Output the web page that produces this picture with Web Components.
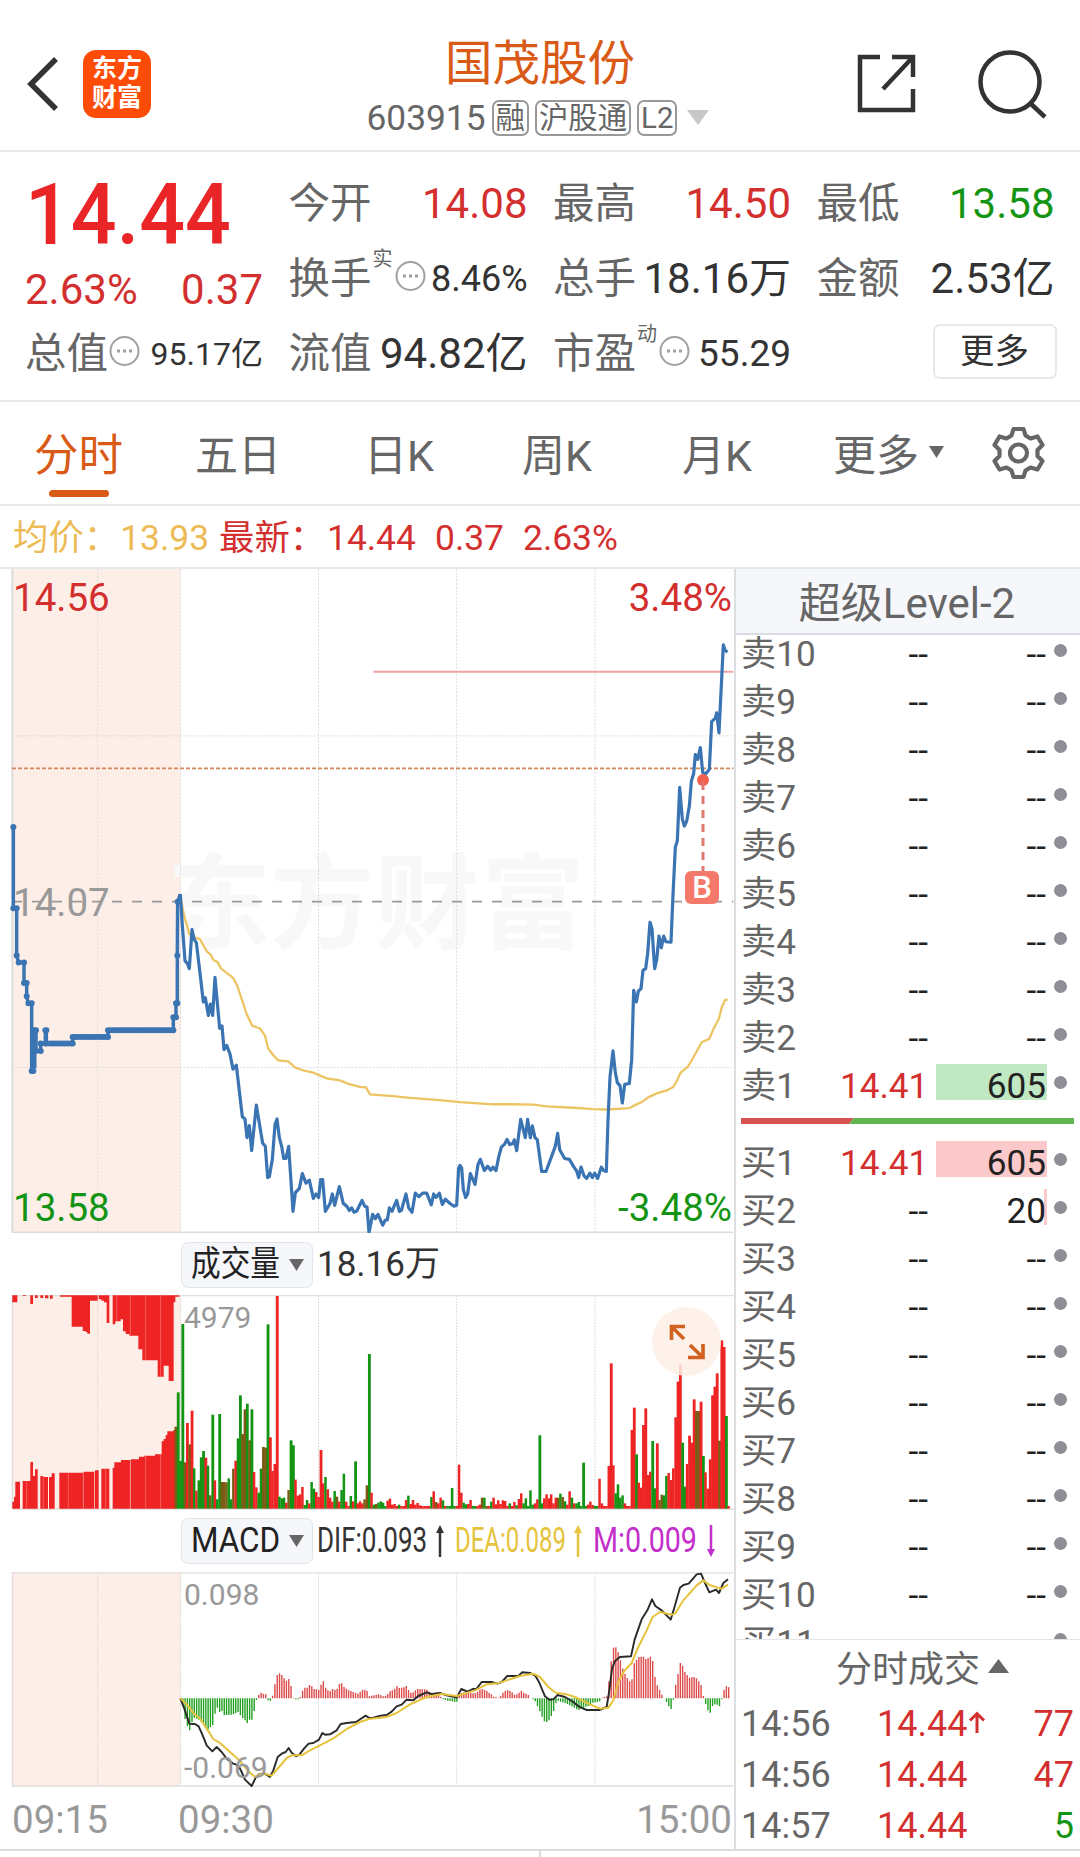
<!DOCTYPE html>
<html lang="zh-CN">
<head>
<meta charset="utf-8">
<title>国茂股份 603915</title>
<style>
  body{margin:0;background:#fff;color:#333;font-family:Roboto,"Noto Sans CJK SC",sans-serif;width:1080px;height:1857px;overflow:hidden;
    --up:#d32f2f;--down:#149414;--brand:#d95a16;--grey:#666;--line:#e6e8e9}
</style>
</head>
<body>
<stock-page></stock-page>
<script>
(function () {
  function define(name, html, setup) {
    const tpl = document.createElement('template');
    tpl.innerHTML = '<style>*{box-sizing:border-box}h1,h2,h3{margin:0}:host{display:block;box-sizing:border-box}</style>' + html;
    customElements.define(name, class extends HTMLElement {
      connectedCallback() {
        if (this.shadowRoot) return;
        this.attachShadow({ mode: 'open' }).appendChild(tpl.content.cloneNode(true));
        if (setup) setup(this, this.shadowRoot);
      }
    });
  }

  // text squeezed or stretched to the width given in w
  define('fit-text', `
    <style>:host{display:block;flex:none;white-space:nowrap}span{display:inline-block;transform-origin:0 50%}</style>
    <span><slot></slot></span>`, (el, s) => {
    const span = s.querySelector('span');
    const w = +el.getAttribute('w');
    el.style.width = w + 'px';
    span.style.transform = 'scaleX(' + w / span.offsetWidth + ')';
  });

  define('stock-header', `
    <style>
      :host{height:152px;border-bottom:2px solid var(--line);display:grid;grid-template-columns:1fr auto 1fr;padding:34px 33px 0 26px}
      .left{display:flex;gap:24px;padding-top:16px;align-items:flex-start}
      .logo{width:68px;height:68px;border-radius:13px;background:#fc4c08;color:#fff;font-size:25px;line-height:29px;font-weight:700;text-align:center;padding-top:4px}
      .mid{text-align:center;margin-left:7px}
      h1{font-size:47.500px;line-height:60px;font-weight:400;color:var(--brand)}
      .sub{display:flex;align-items:center;justify-content:center;height:36px;margin-top:6px;font-size:35.300px;color:var(--grey);margin-right:4px}
      .tag{border:2px solid #999;border-radius:7px;height:36px;line-height:33px;padding:0 2px;font-size:29.400px;margin-left:6px}
      .right{display:flex;justify-content:flex-end;gap:61px;padding-top:14px}
    </style>
    <div class="left">
      <svg width="33" height="68" fill="none" stroke="#333" stroke-width="5.5"><path d="M30 9 5 34l25 25"/></svg>
      <div class="logo">东方<br>财富</div>
    </div>
    <div class="mid">
      <h1>国茂股份</h1>
      <div class="sub">603915<span class="tag">融</span><span class="tag">沪股通</span><span class="tag">L2</span>
        <svg width="22" height="16" style="margin-left:10px"><path d="M0 0h22L11 15z" fill="#c8c8c8"/></svg></div>
    </div>
    <div class="right">
      <svg width="59" height="66" fill="none" stroke="#333" stroke-width="4.5"><path d="M23 9H3v53h53V41M35 9h21v20M56 9 26 41"/></svg>
      <svg width="70" height="72" fill="none" stroke="#333" stroke-width="4.5"><circle cx="33" cy="34" r="29.5"/><path d="m53 55 15 14"/></svg>
    </div>`);

  define('quote-item', `
    <style>
      :host{display:flex;align-items:center;justify-content:space-between;height:56px;white-space:nowrap;font-size:42px;line-height:56px}
      .l{color:var(--grey);font-size:41.500px;display:flex;align-items:center}
      sup{font-size:20px;line-height:20px;align-self:flex-start;margin:-2px 1px 0 1px}
      svg{margin-left:1px;position:relative;top:-3px}
      .v{color:var(--c,#333)}
    </style>
    <span class="l"></span><span class="v"><slot></slot></span>`, (el, s) => {
    const info = '<svg width="31" height="32" fill="none" stroke="#a0a0a0" stroke-width="2"><circle cx="15.5" cy="16" r="14"/><path d="M8 16h3m3 0h3m3 0h3" stroke-width="3"/></svg>';
    const sup = el.getAttribute('sup');
    s.querySelector('.l').innerHTML = el.getAttribute('label') + (sup ? '<sup>' + sup + '</sup>' : '') + (el.hasAttribute('info') ? info : '');
    if (el.getAttribute('size')) s.querySelector('.v').style.fontSize = el.getAttribute('size') + 'px';
  });

  define('stock-quote', `
    <style>
      :host{display:grid;grid-template-columns:238px 239px 238px 238px;grid-template-rows:repeat(3,56px);column-gap:25.5px;row-gap:19px;align-items:start;padding:24px 0 0 25px;height:250px;border-bottom:2px solid var(--line)}
      .price{grid-row:1/3;color:var(--up)}
      .price b{display:block;font-size:85px;line-height:78px;font-weight:500;color:#e92527}
      .price div{display:flex;justify-content:space-between;font-size:42px;line-height:50px;margin-top:11px}
      .up{--c:var(--up)}.down{--c:var(--down)}
      .more{justify-self:end;width:124px;height:55px;border:2px solid var(--line);border-radius:7px;font-size:34.500px;line-height:50px;text-align:center;margin:-2px -2px 0 0}
    </style>
    <div class="price"><b><fit-text w="206">14.44</fit-text></b><div><span>2.63%</span><span>0.37</span></div></div>
    <quote-item label="今开" class="up">14.08</quote-item>
    <quote-item label="最高" class="up">14.50</quote-item>
    <quote-item label="最低" class="down">13.58</quote-item>
    <quote-item label="换手" sup="实" info size="36">8.46%</quote-item>
    <quote-item label="总手">18.16万</quote-item>
    <quote-item label="金额">2.53亿</quote-item>
    <quote-item label="总值" info size="32">95.17亿</quote-item>
    <quote-item label="流值">94.82亿</quote-item>
    <quote-item label="市盈" sup="动" info size="37">55.29</quote-item>
    <div class="more">更多</div>`);

  define('chart-tabs', `
    <style>
      :host{display:flex;align-items:flex-start;height:104px;border-bottom:2px solid var(--line);padding:24px 35px 0 34px;font-size:43px;line-height:60px;color:var(--grey)}
      .on{color:var(--brand);font-size:44.500px}
      .on::after{content:'';display:block;width:60px;height:7px;border-radius:4px;background:var(--brand);margin:4px auto 0}
      span{flex:none}
      .m{display:flex;align-items:center}
      .gear{margin:0 0 0 auto}
    </style>
    <span class="on" style="margin-right:72px">分时</span><span style="width:169px">五日</span><span style="width:158px">日K</span><span style="width:160px">周K</span><span style="width:151px">月K</span>
    <span class="m">更多<svg width="15" height="13" style="margin-left:10px;margin-top:-8px"><path d="M0 0h15L7.500 12z" fill="#666"/></svg></span>
    <svg class="gear" width="53" height="54" viewBox="-26.500 -27 53 54" fill="none" stroke="#666" stroke-width="4.200" stroke-linejoin="round"><circle r="8.500"/>
      <path d="M-5-24H5L7-17.500 12-14.500 19-16.500 24-8 19-3V3L24 8 19 16.500 12 14.500 7 17.500 5 24H-5L-7 17.500-12 14.500-19 16.500-24 8-19 3V-3L-24-8-19-16.500-12-14.500-7-17.500z"/></svg>`);

  define('price-line', `
    <style>
      :host{display:flex;height:63px;border-bottom:2px solid var(--line);padding-left:13px;font-size:35.400px;line-height:64px;color:var(--up);white-space:pre}
      .avg{color:#edbb55;width:206px}span{flex:none}
    </style>
    <span class="avg">均价：<i style="font-style:normal;margin-left:1px">13.93</i></span><span style="width:108px">最新：</span><span style="width:108px">14.44</span><span style="width:88px">0.37</span><span>2.63%</span>`);

  const num = t => t.trim().split(/\s+/).map(p => p.split(',').map(Number));
  const shift = (t, dx) => num(t).map(([x, y]) => [x + dx, y]);
  const pts = a => a.map(p => p.join()).join(' ');

  const PRE = '40,613 40,801 50,801 50,910 56,926 72,926 72,973 80,973 80,1004 85,1020 95,1020 95,1176 100,1176 100,1082 108,1082 108,1130 122,1130 122,1113 136,1113 136,1082 139,1082 139,1113 218,1113 218,1098 324,1098 324,1082 520,1082 520,1052 528,1052 528,1020 532,1020 532,910 533,786 541,768';
  const PRICE = num(`541,768 547,840 555,922 562,928 568,940 576,850 582,872 589,880 600,950 610,1017 616,1007 625,1048 631,1022 638,1048 645,960 659,1078 666,1072 672,1127 680,1117 690,1137 699,1172 709,1163 727,1282 735,1287 741,1330 748,1302 755,1360 769,1255 788,1343 796,1350 803,1422 808,1420 817,1380 825,1300 831,1287 838,1330 845,1350 851,1378 858,1378 866,1350 879,1500 886,1457 898,1447 907,1413 918,1435 928,1428 940,1470 948,1460 956,1468 962,1427 968,1427 976,1500 990,1482 997,1460 1004,1486 1018,1443 1030,1482 1040,1488 1048,1498 1055,1492 1062,1502 1070,1500`)
    .concat(shift(`6,1475 14,1488 21,1490 27,1549 38,1507 46,1517 54,1507 68,1532 76,1520 82,1520 88,1492 96,1500 103,1487 110,1475 118,1500 124,1498 138,1460 146,1492 156,1502 166,1458 177,1466 188,1458 200,1458 214,1485 221,1460 228,1468 238,1458 247,1484 256,1472 270,1482 282,1488 290,1486 296,1400 300,1394 305,1400 310,1450 317,1468 323,1460 331,1413 345,1438 354,1392 361,1380 373,1406 383,1396 392,1405 399,1398 408,1406 416,1375 424,1352 434,1345 441,1334 449,1346 458,1344 463,1335 470,1360 482,1288 496,1330 503,1288 511,1330 517,1303 525,1330 532,1335 545,1408 558,1408 574,1375 586,1350 593,1320 599,1358 614,1378 628,1380 642,1398 650,1407 656,1422 663,1398 672,1418 680,1424 690,1412 697,1422 704,1412 713,1424 724,1398 731,1406 739,1408 744,1290 750,1190 759,1130 766,1180 772,1203 780,1210 787,1250 794,1207 808,1205 815,1150 821,990 829,1017 835,992 843,986 849,944 857,940 863,905 870,833 876,848 884,940 890,920 897,865 904,892 911,865 918,878 933,879 939,770 946,660 952,645 959,522 967,595 973,611 980,600 988,565 994,508 1001,490 1006,446 1013,457 1021,430 1028,487 1037,491 1048,480 1055,370 1066,362 1070,350 1077,396 1090,193 1095,205 1102,210`, 1080));
  const AVG = num(`541,775 553,820 568,860 583,868 600,872 620,900 632,908 640,920 653,925 663,940 680,950 700,962 712,980 725,1010 740,1045 757,1072 780,1078 795,1095 805,1125 820,1140 835,1152 865,1154 885,1168 910,1175 940,1180 980,1193 1020,1198 1045,1206 1080,1213`)
    .concat(shift(`18,1214 30,1230 100,1234 150,1238 230,1243 300,1248 400,1253 450,1253 520,1254 560,1258 640,1261 700,1264 740,1265 808,1262 825,1255 845,1248 865,1237 890,1228 920,1221 940,1213 950,1200 962,1180 985,1165 1000,1145 1025,1110 1048,1102 1060,1080 1077,1055 1085,1030 1095,1013 1103,1011`, 1080));

  define('price-chart', `
    <style>
      :host{position:relative;height:664px;font-size:38.500px;line-height:38px}
      .plot{display:block}
      .plot polyline,.plot path{fill:none;vector-effect:non-scaling-stroke}
      .t{position:absolute}
      .b{position:absolute;left:685px;top:302px;width:34px;height:33px;border-radius:6px;background:#f5796a;color:#fff;font-size:31px;line-height:34px;font-weight:500;text-align:center}
      .pin{position:absolute;left:696px;top:204px}
    </style>
    <svg class="plot" width="734" height="664" viewBox="0 18 2202 1532" preserveAspectRatio="none"></svg>
    <span class="t" style="left:13px;top:10px;color:var(--up)">14.56</span>
    <span class="t" style="right:2px;top:10px;color:var(--up)">3.48%</span>
    <span class="t" style="left:13px;top:315px;color:#999">14.07</span>
    <span class="t" style="left:13px;top:620px;color:var(--down)">13.58</span>
    <span class="t" style="right:2px;top:620px;color:var(--down)">-3.48%</span>
    <svg class="pin" width="14" height="98"><circle cx="7" cy="7" r="6" fill="#f2614f"/><path d="M7 9v89" stroke="#e07a70" stroke-width="3" stroke-dasharray="8 6"/></svg>
    <div class="b">B</div>`, (el, s) => {
    const dots = num(PRE).slice(0, -1).map(p => 'M' + p + 'h.1').join('');
    let run = '';
    for (let x = 150; x < 520; x += 9) run += 'M' + x + ' ' + (x < 218 ? 1113 : x < 324 ? 1098 : 1082) + 'h.1';
    s.querySelector('.plot').innerHTML = `
      <rect x="36" y="18" width="506" height="1532" fill="#fdeee7"/>
      <g fill="#f8f8f8" font-family="Noto Sans CJK SC" font-weight="700" font-size="104" transform="scale(3 2.307)">
        <text x="167" y="380">东</text><text x="270" y="380">方</text><text x="375" y="380">财</text><text x="481" y="380">富</text></g>
      <path d="M293 18V1550M541.500 18V1550M955.500 18V1550M1370 18V1550M1785 18V1550M36 403H2200M36 1168H2200" stroke="#dcdcdc" stroke-dasharray="2 1.500"/>
      <path d="M37 18V1549H2200" stroke="#dcdcdc" stroke-width="2"/>
      <path d="M36 478H2200" stroke="#d2885c" stroke-width="1.600" stroke-dasharray="4 2"/>
      <path d="M36 785.500H2200" stroke="#999" stroke-width="1.800" stroke-dasharray="10 10"/>
      <path d="M1120 255H2200" stroke="#efa3a3" stroke-width="2"/>
      <polyline points="${pts(AVG)}" stroke="#ecc462" stroke-width="2.300"/>
      <polyline points="${PRE}" stroke="#3b74b3" stroke-width="3.500"/>
      <path d="M102 1082V1170" stroke="#3b74b3" stroke-width="5"/>
      <path d="${dots}${run}" stroke="#3b74b3" stroke-width="6" stroke-linecap="round"/>
      <polyline points="${pts(PRICE)}" stroke="#3b74b3" stroke-width="3.200" stroke-linejoin="round"/>`;
  });

  define('indicator-bar', `
    <style>
      :host{display:flex;align-items:center;padding-left:181px;font-size:35px;color:#333;height:46px}
      .btn{flex:none;width:132px;height:46px;background:#f6f7fa;border:1px solid #e2e5e8;border-radius:7px;display:flex;align-items:center;justify-content:space-between;padding:0 8px 0 9px;color:#222;margin-right:4px;line-height:46px}
      ::slotted(*){line-height:46px}
    </style>
    <div class="btn"><fit-text></fit-text><svg width="15" height="12"><path d="M0 0h15L7.500 12z" fill="#666"/></svg></div><slot></slot>`, (el, s) => {
    const f = s.querySelector('fit-text');
    const n = document.createElement('fit-text');
    n.setAttribute('w', 89);
    n.textContent = el.getAttribute('name');
    f.replaceWith(n);
  });

  // one bar per minute: top edge and colour (r, g, b = both sides overlap)
  const VOL = `590b 487g 693g 282g 697b 579r 643b 542r 715g 782r 751g 682g 663g 683r 707g 796b 554g 751r 808g 552g 756b 756b 757b 745g 808g 716b 692r 625g 496g 612b 538b 521g 631b 538g 726r 772r 788g 716g 651b 653b 283g 622r 723r 702r 198r 800g 805g 803g 818r 780b 631g 646g 749r 797r 793r 771r 825g 810g 820r 756g 776g 786r 801r 660r 760r 741g 778r 803r 815r 783g 800b 815r 780g 731g 815r 828r 798g 814r 694g 820r 814r 820r 808b 766b 372g 788r 824g 822b 818g
    814g 818g 828g 812r 806r 824r 822r 828r 824g 828r 828r 810r 797g 822r 810r 824r 819r 826r 828r 828r 828r 828r 801g 784r 816b 820r 803r 811g 828r 828g 828g 774g 828g 828r 704r 788r 818g 823g 822r 810r 828g 828g 828r 824r 803b 803g 828b 828r 815g 803r 823r 811r 822r 811r 813r 828r 820g 828r 816r 826g 807r 790r 820g 805g 828g 781g 824g 820r 808r 616g 820g 805r 793r 805r 793r 820r 803r 803b 791g 801b 814g 824r 784r 803g 820r 820g 816g 828g 698g 828g 824r 815r 825r 828g 828g 746r 820r 828r 828r 708r 400r 706r 790g 763g 803g 796g 820r 828r 828r 600r 533r 673g 758r 773r 585r 535r 735r 725r 633g 775g 640r 810b 794b 796g 738g 729r 750r 715r 562r 455r 404r 638g 770g 702r 617r 638r 508r 543b 543b 515r 678g 727r 776r 688r 496r 470r 430r 632b 331r 351r 558g 828r`.trim().split(/\s+/);
  // call auction: x from, x to, edge
  const MATCHED = num('37,42,815 42,46,800 46,60,755 68,91,753 91,99,696 99,105,738 105,113,718 121,130,738 130,144,741 147,155,741 155,164,730 178,250,728 251,283,725 285,296,721 304,328,716 338,343,713 343,363,697 363,391,690 393,417,688 417,433,680 433,465,677 465,485,673 485,491,634 491,497,627 497,502,615 502,520,604 520,527,600');
  const UNMATCHED = num('37,52,217 68,78,198 91,99,222 105,113,204 121,130,204 135,145,205 150,158,206 180,215,200 215,248,290 248,257,303 257,262,306 262,270,311 270,293,212 296,304,208 304,312,212 312,320,217 320,328,279 338,346,283 346,362,274 362,369,268 369,377,304 377,388,312 388,415,317 415,427,358 427,473,391 473,491,440 491,506,407 506,521,453 521,526,217 526,538,200');

  define('volume-chart', `
    <style>
      :host{position:relative;height:215px;font-size:30px;line-height:30px;color:#999}
      .t{position:absolute;left:184px;top:8px}
      .zoom{position:absolute;left:652px;top:12px}
      .plot{display:block}
    </style>
    <svg class="plot" width="734" height="215" viewBox="0 195 2202 645"></svg>
    <span class="t">4979</span>
    <svg class="zoom" width="69" height="69" fill="none" stroke="#d2601f" stroke-width="3.600"><circle cx="34.500" cy="34.500" r="34.500" fill="#fdeee6" fill-opacity=".85" stroke="none"/><path d="M19.500 33V19.500H33M19.500 19.500 32 32M51 37V50.500H36M51 50.500 38 38"/></svg>`, (el, s) => {
    const col = { r: '#ee2424', g: '#149414', b: '#7c5a14' };
    const bars = VOL.map((v, i) => {
      const y = parseInt(v, 10);
      return `<rect x="${(523.5 + i * 6.91).toFixed(1)}" y="${y}" width="${y < 700 ? 8.5 : 7.5}" height="${836 - y}" fill="${col[v.slice(-1)]}"/>`;
    }).join('');
    const low = MATCHED.map(([a, b, y]) => `M${a} ${y}H${b}V836H${a}z`).join('');
    const high = UNMATCHED.map(([a, b, y]) => `M${a} 196H${b}V${y}H${a}z`).join('');
    s.querySelector('.plot').innerHTML = `
      <rect x="36" y="196" width="506" height="640" fill="#fdeee7"/>
      <path d="M293 196V836M541.500 196V836M955.500 196V836M1370 196V836M1785 196V836" stroke="#d8d8d8" stroke-width="3" stroke-dasharray="5 4"/>
      <path d="M37 836V196.500H2200M37 837H2200" stroke="#dedede" stroke-width="4" fill="none"/>
      <path d="${low}${high}" fill="#ee2424"/>
      <path d="M80 753v83M130 738v98M205 728v108M250 728v108M317 716v120M391 690v146M437 677v159M482 673v163M391 196v121M437 196v195M482 196v244M350 196v78" stroke="#f77" stroke-width="2"/>
      ${bars}`;
  });

  const HIST = num(`541,600 548,610 555,655 562,678 569,690 576,665 583,652 590,655 600,660 610,670 624,687 631,680 638,675 645,640 652,622 659,635 666,632 673,645 700,642 714,635 721,645 735,660 742,668 748,658 755,660 762,635 769,600 776,583 783,577 790,580 797,582 803,599 810,603 817,590 824,556 831,525 838,519 845,523 852,534 859,541 866,535 873,556 880,592 887,597 894,597 901,590 908,570 915,562 922,562 929,553 936,559 943,567 957,568 963,553 970,543 977,562 984,570 991,573 998,565 1005,568 1012,565 1018,551 1025,549 1032,560 1046,570 1060,575 1075,580 1088,568`)
    .concat(shift(`20,568 26,588 40,585 55,582 70,588 80,585 90,573 102,568 110,556 117,563 130,562 138,556 145,568 155,580 163,573 172,566 190,567 203,568 213,580 228,582 240,585 247,596 260,600 275,603 290,607 297,580 310,576 330,578 345,580 360,568 366,566 380,572 393,580 400,588 414,594 421,588 430,575 442,569 455,574 465,585 478,577 484,571 494,580 503,580 510,593 524,600 538,630 552,662 559,666 566,662 580,635 590,600 600,603 620,610 640,620 655,630 670,622 690,615 700,606 718,605 725,592 740,588 747,541 753,487 760,442 766,438 774,455 780,475 788,505 800,530 808,543 815,543 822,490 830,478 836,470 849,468 860,478 870,468 877,475 885,530 892,555 900,570 908,588 917,600 925,615 932,630 939,607 945,561 952,535 959,487 966,490 973,512 987,532 1007,530 1014,541 1022,548 1028,580 1035,605 1042,625 1049,643 1056,618 1063,612 1070,610 1077,622 1084,603 1091,570 1098,558 1110,562`, 1080));
  const DIF = num(`541,594 553,625 568,670 585,671 596,678 608,705 620,735 637,753 650,740 665,755 680,775 700,790 715,795 725,815 735,838 755,857 767,832 776,822 793,819 810,830 820,810 833,770 845,760 857,755 866,743 875,757 888,768 898,763 912,745 926,730 940,728 957,718 967,698 975,703 990,702 1010,690 1022,671 1040,668 1068,665 1097,646 1108,653`)
    .concat(shift(`40,652 62,646 80,644 95,634 110,618 125,613 140,598 160,600 175,587 200,576 215,581 240,578 260,585 290,592 304,566 322,574 340,566 350,565 365,545 395,545 412,550 425,545 442,527 475,527 487,516 510,518 525,525 537,545 555,588 568,598 580,597 593,584 615,590 640,605 657,619 680,629 718,629 740,620 748,570 756,505 765,482 780,470 813,468 824,417 845,357 862,330 876,297 886,317 905,330 932,358 942,325 960,262 970,254 986,250 1010,222 1023,220 1035,248 1048,276 1068,268 1077,278 1090,248 1104,237`, 1080));
  const DEA = num(`541,594 560,613 585,643 600,655 620,685 640,716 660,728 720,782 745,813 765,830 780,822 800,822 815,826 835,803 860,773 875,765 905,765 930,750 960,735 1000,714 1040,686 1080,665 1107,656`)
    .concat(shift(`80,650 110,638 150,612 200,590 245,581 290,587 325,576 345,570 380,552 412,549 440,540 480,527 520,520 540,530 565,560 587,577 620,582 645,590 690,612 720,625 745,622 760,600 775,545 790,515 815,488 835,440 860,390 878,350 900,335 935,343 945,340 970,300 1010,255 1030,240 1050,255 1085,265 1104,253`, 1080));

  define('macd-chart', `
    <style>
      :host{position:relative;height:215px;font-size:30px;line-height:30px;color:#999}
      .t{position:absolute;left:184px;top:8px}
      .plot{display:block}
    </style>
    <svg class="plot" width="734" height="215" viewBox="0 215 2202 645"></svg>
    <span class="t">0.098</span><span class="t" style="top:181px">-0.069</span>`, (el, s) => {
    let up = '', down = '', k = 0;
    for (let x = 548.4; x < 2189; x += 6.91) {
      while (HIST[k + 1][0] < x) k++;
      const [a, ya] = HIST[k], [b, yb] = HIST[k + 1];
      const y = ya + (yb - ya) * (x - a) / (b - a);
      const d = `M${x.toFixed(1)} 594V${y.toFixed(0)}`;
      if (y < 594) up += d; else down += d;
    }
    s.querySelector('.plot').innerHTML = `
      <rect x="36" y="217" width="506" height="640" fill="#fdeee7"/>
      <path d="M293 217V857M541.500 217V857M955.500 217V857M1370 217V857M1785 217V857" stroke="#d8d8d8" stroke-width="3" stroke-dasharray="5 4"/>
      <path d="M2200 217.500H37V857H2200" stroke="#dedede" stroke-width="4" fill="none"/>
      <path d="${up}" stroke="#dd4a4a" stroke-width="4.200"/><path d="${down}" stroke="#22a022" stroke-width="4.200"/>
      <polyline points="${pts(DIF)}" fill="none" stroke="#2b2b2b" stroke-width="5.800" stroke-linejoin="round"/>
      <polyline points="${pts(DEA)}" fill="none" stroke="#e6c33c" stroke-width="6" stroke-linejoin="round"/>`;
  });

  define('book-row', `
    <style>
      :host{display:grid;grid-template-columns:99px 88px 119px 20px;height:48px;line-height:48px;font-size:35.200px;padding-left:5px;text-align:right;color:#222;flex:none}
      .l{text-align:left;color:var(--grey)}
      .p{color:var(--c,#222)}
      .q{background:linear-gradient(var(--bar,transparent) 0 0) right 2px/var(--bw,111px) 36px no-repeat;padding-right:1px}
      i{width:13px;height:13px;border-radius:50%;background:#8e8e96;margin:14px 0 0 7px}
    </style>
    <span class="l"></span><span class="p"></span><span class="q"></span><i></i>`, (el, s) => {
    s.querySelector('.l').textContent = el.getAttribute('label');
    s.querySelector('.p').textContent = el.getAttribute('price') || '--';
    s.querySelector('.q').textContent = el.getAttribute('qty') || '--';
    if (el.hasAttribute('price')) el.style.setProperty('--c', 'var(--up)');
  });

  define('order-book', `
    <style>
      :host{display:flex;flex-direction:column;width:346px;height:1281px;border-left:2px solid #dcdfe2;color:var(--grey)}
      h2{height:66px;font-size:42px;line-height:70px;font-weight:400;text-align:center;background:#f6f7fa;border-bottom:2px solid #d9dce0;flex:none;padding-right:2px}
      .rows{height:1005px;overflow:hidden;flex:none;border-bottom:1px solid #e3e5e8}
      .in{display:flex;flex-direction:column;margin-top:-5px}
      .in svg{flex:none;margin:8px 0 15px 5px}
      h3{font-size:36px;font-weight:400;line-height:62px;height:59px;flex:none;display:flex;align-items:center;padding-left:100px;gap:8px}
      h3 svg{margin-top:-8px}
      .deal{display:grid;grid-template-columns:136px 109px 1fr;height:51px;line-height:51px;font-size:36px;padding:0 6px 0 5px;color:var(--up);align-items:center}
      .deal :first-child{color:var(--grey)}
      .deal :last-child{text-align:right}
    </style>
    <h2>超级Level-2</h2>
    <div class="rows"><div class="in"></div></div>
    <h3>分时成交<svg width="21" height="14"><path d="M0 14h21L10.500 0z" fill="#666"/></svg></h3>
    <div class="deal"><span>14:56</span><span style="white-space:nowrap">14.44<svg width="18" height="25" fill="none" stroke="#d32f2f" stroke-width="3" style="margin-left:1px"><path d="M9 22V2M2 9.500 9 2.500l7 7"/></svg></span><span>77</span></div>
    <div class="deal"><span>14:56</span><span>14.44</span><span>47</span></div>
    <div class="deal"><span>14:57</span><span>14.44</span><span style="color:var(--down)">5</span></div>`, (el, s) => {
    let html = '';
    for (let i = 10; i > 1; i--) html += `<book-row label="卖${i}"></book-row>`;
    html += '<book-row label="卖1" price="14.41" qty="605" style="--bar:#c0e8c3"></book-row>';
    html += '<svg width="333" height="6"><path d="M0 0h113l-5 6H0z" fill="#d75150"/><path d="M113 0h220v6H108z" fill="#62b651"/></svg>';
    html += '<book-row label="买1" price="14.41" qty="605" style="--bar:#fbc9c9"></book-row>';
    html += '<book-row label="买2" qty="20" style="--bar:#fbc9c9;--bw:3px"></book-row>';
    for (let i = 3; i < 12; i++) html += `<book-row label="买${i}"></book-row>`;
    s.querySelector('.in').innerHTML = html;
  });

  define('stock-page', `
    <style>
      .main{display:flex;height:1282px;border-bottom:2px solid #dcdcdc}
      .charts{width:734px;flex:none}
      .arr{flex:none}
      .time{display:flex;font-size:38.500px;line-height:66px;color:#999;padding:0 2px 0 12px}
      .foot{height:6px;width:541px;border-right:2px solid #ddd}
    </style>
    <stock-header></stock-header>
    <stock-quote></stock-quote>
    <chart-tabs></chart-tabs>
    <price-line></price-line>
    <div class="main">
      <div class="charts">
        <price-chart></price-chart>
        <indicator-bar name="成交量" style="margin:9px 0 7px"><span>18.16万</span></indicator-bar>
        <volume-chart></volume-chart>
        <indicator-bar name="MACD" style="margin:8px 0 8px">
          <fit-text w="110">DIF:0.093</fit-text>
          <svg class="arr" width="12" height="32" style="margin:0 9px 0 7px"><path d="M6 32V4" stroke="#333" stroke-width="2.500"/><path d="M6 0l4 8H2z" fill="#333"/></svg>
          <fit-text w="111" style="color:#e6c33c">DEA:0.089</fit-text>
          <svg class="arr" width="12" height="32" style="margin:0 9px 0 6px"><path d="M6 32V4" stroke="#e6c33c" stroke-width="2.500"/><path d="M6 0l4 8H2z" fill="#e6c33c"/></svg>
          <fit-text w="104" style="color:#c32fca">M:0.009</fit-text>
          <svg class="arr" width="12" height="32" style="margin-left:8px"><path d="M6 0v28" stroke="#c32fca" stroke-width="2.500"/><path d="M6 32l4-8H2z" fill="#c32fca"/></svg>
        </indicator-bar>
        <macd-chart></macd-chart>
        <div class="time"><span style="width:166px">09:15</span><span>09:30</span><span style="margin-left:auto">15:00</span></div>
      </div>
      <order-book></order-book>
    </div>
    <div class="foot"></div>`);
})();
</script>
</body>
</html>
